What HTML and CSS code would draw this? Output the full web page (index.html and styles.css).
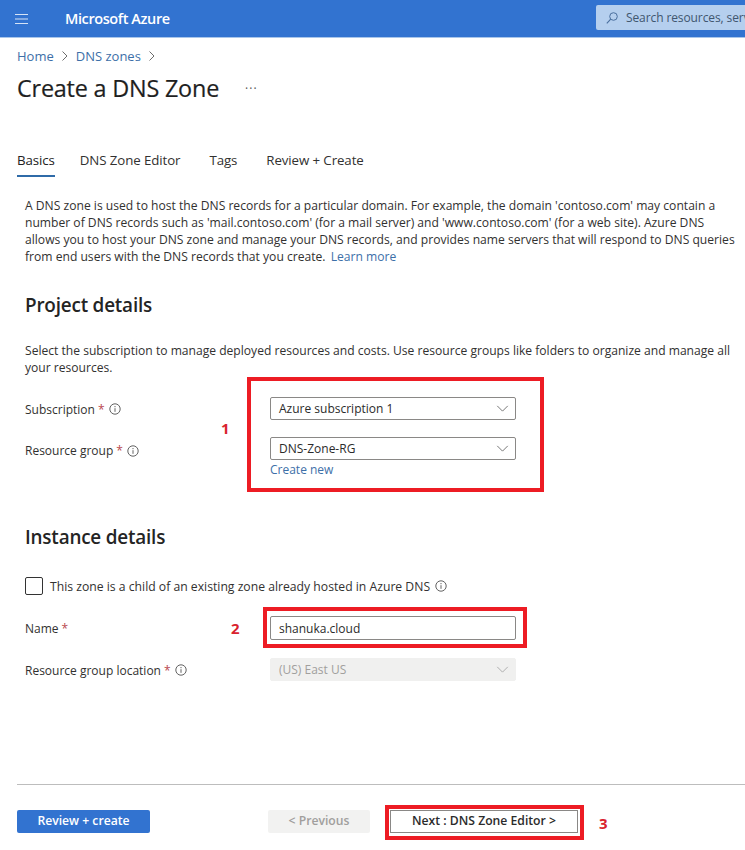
FILE: index.html
```html
<!DOCTYPE html>
<html lang="en">
<head>
<meta charset="utf-8">
<title>Create a DNS Zone - Microsoft Azure</title>
<link rel="stylesheet" href="styles.css">
</head>
<body>
<header class="topbar">
  <svg class="menu-icon" width="16" height="12" viewBox="0 0 16 12"><path d="M1 1.500h13M1 6h13M1 10.500h13" stroke="#d5e3f6" stroke-width="1.200" fill="none"/></svg>
  <span class="brand">Microsoft Azure</span>
  <div class="search">
    <svg class="search-icon" width="14" height="14" viewBox="0 0 14 14"><circle cx="8.500" cy="5.500" r="3.800" fill="none" stroke="#4a6f9e" stroke-width="1"/><path d="M5.700 8.200 1.800 12.400" stroke="#4a6f9e" stroke-width="1.100"/></svg>
    <span class="search-text">Search resources, serv</span>
  </div>
</header>
<main class="page">
  <nav class="crumbs">
    <a class="link">Home</a>
    <svg class="chev" width="8" height="12" viewBox="0 0 8 12"><path d="M1.500 1.500 6 6l-4.500 4.500" fill="none" stroke="#6d6d6d"/></svg>
    <a class="link">DNS zones</a>
    <svg class="chev" width="8" height="12" viewBox="0 0 8 12"><path d="M1.500 1.500 6 6l-4.500 4.500" fill="none" stroke="#6d6d6d"/></svg>
  </nav>
  <div class="title-row">
    <h1>Create a DNS Zone</h1>
    <span class="more">···</span>
  </div>
  <div class="tabs">
    <span class="tab active">Basics</span>
    <span class="tab">DNS Zone Editor</span>
    <span class="tab">Tags</span>
    <span class="tab">Review + Create</span>
  </div>
  <div class="content">
    <p class="intro">A DNS zone is used to host the DNS records for a particular domain. For example, the domain 'contoso.com' may contain a number of DNS records such as 'mail.contoso.com' (for a mail server) and 'www.contoso.com' (for a web site). Azure DNS allows you to host your DNS zone and manage your DNS records, and provides name servers that will respond to DNS queries from end users with the DNS records that you create. <a class="link learn">Learn more</a></p>
    <h2 class="project">Project details</h2>
    <p class="sub">Select the subscription to manage deployed resources and costs. Use resource groups like folders to organize and manage all your resources.</p>
    <div class="fields project-fields">
      <div class="mark mark-1"></div>
      <span class="num num-1">1</span>
      <div class="row">
        <label>Subscription <em>*</em> <svg class="info" viewBox="0 0 12 12"><circle cx="6" cy="6" r="5.200"/><path d="M6 5.200v3.600M6 3v1.200"/></svg></label>
        <div class="control"><span>Azure subscription 1</span><svg class="caret" viewBox="0 0 14 8"><path d="M1 1l6 6 6-6"/></svg></div>
      </div>
      <div class="row group-row">
        <label>Resource group <em>*</em> <svg class="info" viewBox="0 0 12 12"><circle cx="6" cy="6" r="5.200"/><path d="M6 5.200v3.600M6 3v1.200"/></svg></label>
        <div class="stack">
          <div class="control"><span>DNS-Zone-RG</span><svg class="caret" viewBox="0 0 14 8"><path d="M1 1l6 6 6-6"/></svg></div>
          <a class="link create">Create new</a>
        </div>
      </div>
    </div>
    <h2 class="instance">Instance details</h2>
    <div class="check-row">
      <span class="box"></span>
      <span>This zone is a child of an existing zone already hosted in Azure DNS</span>
      <svg class="info" viewBox="0 0 12 12"><circle cx="6" cy="6" r="5.200"/><path d="M6 5.200v3.600M6 3v1.200"/></svg>
    </div>
    <div class="fields instance-fields">
      <div class="mark mark-2"></div>
      <span class="num num-2">2</span>
      <div class="row name-row">
        <label>Name <em>*</em></label>
        <div class="control name-control"><span>shanuka.cloud</span></div>
      </div>
      <div class="row location-row">
        <label>Resource group location <em>*</em> <svg class="info" viewBox="0 0 12 12"><circle cx="6" cy="6" r="5.200"/><path d="M6 5.200v3.600M6 3v1.200"/></svg></label>
        <div class="control disabled"><span>(US) East US</span><svg class="caret" viewBox="0 0 14 8"><path d="M1 1l6 6 6-6"/></svg></div>
      </div>
    </div>
  </div>
  <footer class="footer">
    <button class="btn primary">Review + create</button>
    <button class="btn prev">&lt; Previous</button>
    <div class="next-wrap">
      <button class="btn next">Next : DNS Zone Editor &gt;</button>
      <span class="num num-3">3</span>
    </div>
  </footer>
</main>
</body>
</html>
```
FILE: styles.css
```css
* { box-sizing: border-box; }
html, body { margin: 0; padding: 0; }
body {
  width: 745px;
  height: 850px;
  overflow: hidden;
  background: #fff;
  font-family: "Open Sans", "Noto Sans", sans-serif;
  font-size: 12px;
  color: #323130;
}
.link { color: #3d6fa8; }
.learn { margin-left: 2px; }
.topbar {
  height: 38px;
  background: #3273d0;
  border-bottom: 1px solid #a9c6ea;
  display: flex;
  align-items: center;
  overflow: hidden;
}
.menu-icon { margin-left: 14px; flex: none; }
.brand {
  margin-left: 35px;
  color: #fff;
  font-size: 14.500px;
  font-weight: 600;
  letter-spacing: -0.400px;
}
.search {
  margin-left: auto;
  width: 149px;
  height: 25px;
  margin-top: -2px;
  background: #b5cfee;
  border-radius: 2px 0 0 2px;
  display: flex;
  align-items: center;
  padding-left: 9px;
  gap: 7px;
  white-space: nowrap;
  overflow: hidden;
  color: #40566f;
  font-size: 12px;
  letter-spacing: -0.100px;
}
.search-icon { flex: none; }
.page { padding: 0 0 0 17px; }
.crumbs {
  display: flex;
  align-items: center;
  gap: 7px;
  height: 18px;
  margin-top: 9px;
  font-size: 13px;
}
.title-row {
  display: flex;
  align-items: center;
  margin-top: 6px;
  height: 34px;
}
h1 {
  margin: 0;
  font-size: 23.400px;
  font-weight: 400;
  color: #1f1f1f;
  -webkit-text-stroke: 0.200px #1f1f1f;
  letter-spacing: -0.200px;
}
.more { margin-left: 26px; font-size: 12px; letter-spacing: 1px; color: #555; }
.tabs {
  display: flex;
  gap: 29px;
  margin-top: 37px;
  height: 35px;
  font-size: 13.300px;
}
.tab { padding-top: 9px; height: 35px; letter-spacing: -0.100px; }
.active {
  color: #222;
  font-weight: 500;
  border-bottom: 2px solid #2f6ba8;
  margin-right: -4px;
}
.content { padding-left: 8px; }
.intro {
  margin: 20px 0 0;
  width: 712px;
  font-size: 12.120px;
  line-height: 17px;
}
h2 {
  margin: 0;
  font-size: 18.900px;
  font-weight: 600;
  color: #242424;
  letter-spacing: -0.200px;
}
.project { margin-top: 28px; line-height: 24px; }
.sub {
  margin: 25px 0 0;
  width: 712px;
  font-size: 12.100px;
  line-height: 17px;
}
.fields { position: relative; }
.project-fields { margin-top: 21px; height: 113px; }
.row { display: flex; align-items: center; height: 23px; }
.row label { width: 245px; flex: none; display: flex; align-items: center; gap: 3px; padding-top: 1px; }
.row em { color: #b9484e; font-style: normal; }
.group-row { margin-top: 17px; align-items: flex-start; }
.group-row label { padding-top: 5px; }
.stack { display: flex; flex-direction: column; }
.control {
  width: 246px;
  height: 23px;
  flex: none;
  border: 1px solid #8a8886;
  border-radius: 2px;
  display: flex;
  align-items: center;
  justify-content: space-between;
  padding: 0 6px 0 8px;
  color: #2b2b2b;
}
.create { margin-top: 1px; }
.info { width: 12px; height: 12px; flex: none; fill: none; stroke: #505050; stroke-width: 0.900; margin-left: 1px; }
.caret { width: 13px; height: 7px; fill: none; stroke: #666; stroke-width: 1; }
.mark {
  position: absolute;
  border: 4px solid #ed1c24;
  z-index: 1;
  pointer-events: none;
}
.mark-1 { left: 222px; top: -20px; width: 297px; height: 115px; }
.mark-2 { left: 238px; top: -9px; width: 264px; height: 41px; }
.num {
  position: absolute;
  color: #d9232e;
  font-weight: 700;
  font-size: 15px;
}
.num-1 { left: 196px; top: 21px; }
.num-2 { left: 206px; top: 2px; }
.instance { margin-top: 15px; line-height: 24px; }
.check-row {
  display: flex;
  align-items: center;
  gap: 7px;
  margin-top: 28px;
  height: 18px;
  font-size: 12.200px;
}
.box {
  width: 18px;
  height: 18px;
  border: 1px solid #333;
  border-radius: 2px;
}
.check-row .info { margin-left: -2px; }
.instance-fields { margin-top: 21px; }
.name-row, .name-control { height: 24px; }
.location-row { margin-top: 18px; }
.disabled {
  background: #f0f0ef;
  border-color: #f0f0ef;
  color: #a19f9d;
}
.disabled .caret { stroke: #a6a6a6; }
.footer {
  display: flex;
  align-items: flex-start;
  margin-top: 103px;
  border-top: 1px solid #bdbdbd;
  padding-top: 20px;
}
.btn {
  height: 23px;
  font: inherit;
  font-size: 12.200px;
  font-weight: 600;
  border-radius: 2px;
  border: 1px solid transparent;
  padding: 0 0 2px;
}
.primary { width: 133px; margin-top: 5px; background: #3273d0; color: #fff; }
.prev { width: 102px; margin-top: 5px; margin-left: 118px; background: #f2f2f1; color: #a19f9d; }
.next-wrap {
  position: relative;
  margin-left: 15px;
  border: 4px solid #ed1c24;
  padding: 1px 2px 3px 1px;
  display: flex;
}
.next { width: 188px; background: #fff; color: #2b2b2b; border: 1px solid #8a8886; border-radius: 0; }
.num-3 { left: 210px; top: 4px; }
```
